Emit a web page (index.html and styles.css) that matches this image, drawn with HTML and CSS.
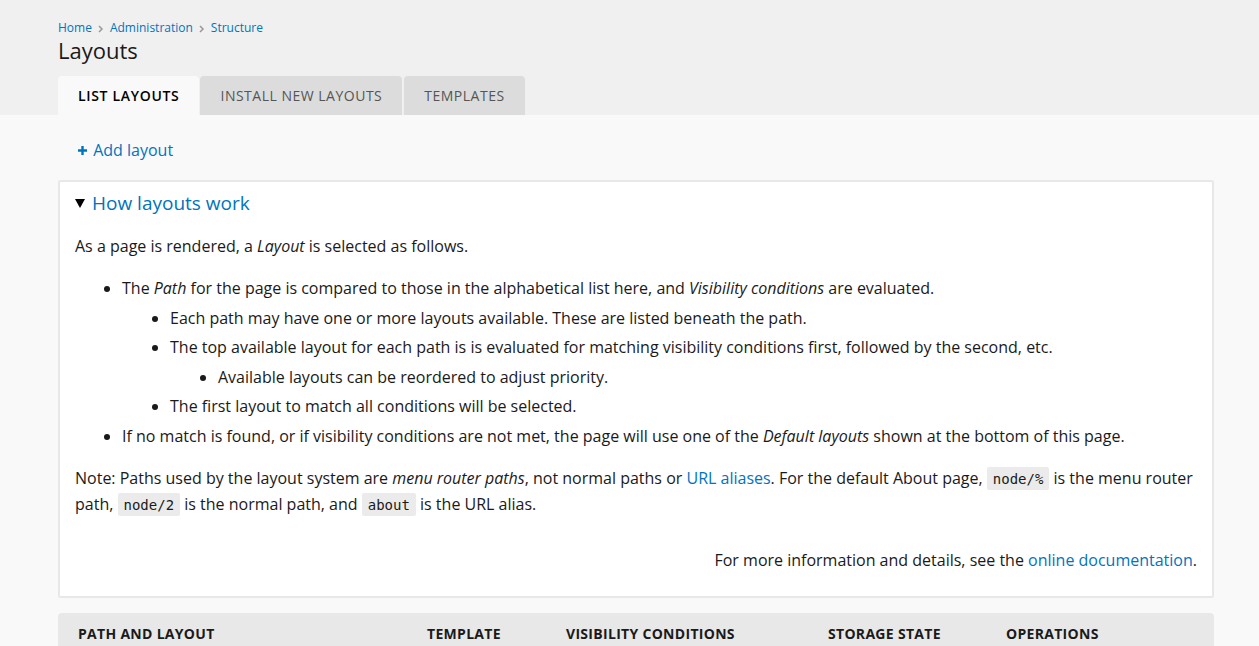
FILE: index.html
```html
<!DOCTYPE html>
<html lang="en">
<head>
    <meta charset="UTF-8">
    <title>Layouts</title>
    <link rel="stylesheet" href="styles.css">
</head>
<body>
    <div class="page-header">
        <nav class="breadcrumb">
            <a href="#">Home</a>
            <svg class="sep" width="6" height="8" viewBox="0 0 6 8"><path d="M1 1l3 3-3 3" fill="none" stroke="#999" stroke-width="1.5"/></svg>
            <a href="#">Administration</a>
            <svg class="sep" width="6" height="8" viewBox="0 0 6 8"><path d="M1 1l3 3-3 3" fill="none" stroke="#999" stroke-width="1.5"/></svg>
            <a href="#">Structure</a>
        </nav>
        <h1 class="page-title">Layouts</h1>
        <ul class="tabs">
            <li class="tab active"><a href="#">List layouts</a></li>
            <li class="tab"><a href="#">Install new layouts</a></li>
            <li class="tab"><a href="#">Templates</a></li>
        </ul>
    </div>

    <div class="main">
        <div class="action-links">
            <a href="#" class="add-link">
                <svg width="9" height="9" viewBox="0 0 9 9"><path d="M4.5 0v9M0 4.5h9" stroke="#0074bd" stroke-width="2.4"/></svg>
                Add layout
            </a>
        </div>

        <div class="help-box">
            <div class="help-title">
                <svg class="arrow" width="10" height="9" viewBox="0 0 10 9"><path d="M0 0h10L5 9z" fill="#000"/></svg>
                <a href="#">How layouts work</a>
            </div>
            <div class="help-body">
                <p>As a page is rendered, a <em>Layout</em> is selected as follows.</p>
                <ul>
                    <li>The <em>Path</em> for the page is compared to those in the alphabetical list here, and <em>Visibility conditions</em> are evaluated.
                        <ul>
                            <li>Each path may have one or more layouts available. These are listed beneath the path.</li>
                            <li>The top available layout for each path is is evaluated for matching visibility conditions first, followed by the second, etc.
                                <ul>
                                    <li>Available layouts can be reordered to adjust priority.</li>
                                </ul>
                            </li>
                            <li>The first layout to match all conditions will be selected.</li>
                        </ul>
                    </li>
                    <li>If no match is found, or if visibility conditions are not met, the page will use one of the <em>Default layouts</em> shown at the bottom of this page.</li>
                </ul>
                <p>Note: Paths used by the layout system are <em>menu router paths</em>, not normal paths or <a href="#">URL aliases</a>. For the default About page, <code>node/%</code> is the menu router path, <code>node/2</code> is the normal path, and <code>about</code> is the URL alias.</p>
                <p class="more-info">For more information and details, see the <a href="#">online documentation</a>.</p>
            </div>
        </div>

        <table class="layouts-table">
            <thead>
                <tr>
                    <th class="col-path">Path and layout</th>
                    <th class="col-template">Template</th>
                    <th class="col-visibility">Visibility conditions</th>
                    <th class="col-storage">Storage state</th>
                    <th class="col-ops">Operations</th>
                </tr>
            </thead>
        </table>
    </div>
</body>
</html>
```

FILE: styles.css
```css
body {
    margin: 0;
    padding: 0;
    background-color: #f9f9f9;
    color: #1a1a1a;
    font-family: "Open Sans", "Liberation Sans", sans-serif;
    font-size: 16px;
}

a {
    color: #0074bd;
    text-decoration: none;
}

.page-header {
    background: #f0f0f0;
    padding: 19px 45px 0 58px;
}

.breadcrumb {
    display: flex;
    align-items: center;
    gap: 6px;
    font-size: 12px;
    line-height: 18px;
}

.breadcrumb .sep {
    margin: 1px 0 0 0;
}

.page-title {
    margin: -2px 0 0;
    font-size: 22px;
    font-weight: 400;
    line-height: 30px;
    color: #1a1a1a;
}

.tabs {
    display: flex;
    gap: 2px;
    margin: 11px 0 0;
    padding: 0;
    list-style: none;
}

.tab a {
    display: block;
    padding: 0 20px;
    height: 39px;
    line-height: 40px;
    font-size: 14px;
    text-transform: uppercase;
    letter-spacing: 0.5px;
    color: #555;
    background: #dcdcdc;
    border-radius: 4px 4px 0 0;
}

.tab.active {
    margin-right: -1px;
}

.tab.active a {
    background: #f9f9f9;
    color: #000;
    font-weight: 600;
    letter-spacing: 0.68px;
}

.main {
    padding: 22px 45px 0 58px;
}

.action-links {
    padding-left: 20px;
    line-height: 26px;
}

.add-link svg {
    margin-right: 2px;
    vertical-align: 1px;
}

.help-box {
    margin-top: 17px;
    background: #fff;
    border: 2px solid #e8e8e8;
    border-radius: 2px;
    padding: 0 15px 23px;
}

.help-title {
    display: flex;
    align-items: center;
    gap: 7px;
    padding-top: 8px;
    font-size: 19px;
    line-height: 26px;
}

.help-body {
    margin-top: 17px;
    line-height: 26px;
}

.help-body p {
    margin: 0 0 16px;
}

.help-body ul {
    margin: 16px 0;
    padding-left: 47px;
    list-style: disc;
}

.help-body ul ul {
    margin: 0;
    padding-left: 48px;
    list-style: disc;
}

.help-body li {
    margin: 3.5px 0 0;
}

.help-body code {
    font-family: "DejaVu Sans Mono", "Liberation Mono", monospace;
    font-size: 14px;
    line-height: 1;
    background: #ebebeb;
    padding: 4px 6px 3px;
    border-radius: 2px;
}

.help-body .more-info {
    margin: 30px 0 0;
    text-align: right;
}

.layouts-table {
    width: 100%;
    margin-top: 15px;
    border-collapse: separate;
    border-spacing: 0;
}

.layouts-table th {
    background: #e8e8e8;
    text-align: left;
    font-size: 14px;
    font-weight: 700;
    letter-spacing: 0.3px;
    text-transform: uppercase;
    padding: 10px 20px;
    line-height: 22px;
}

.layouts-table th:first-child {
    border-radius: 4px 0 0 0;
}

.layouts-table th:last-child {
    border-radius: 0 4px 0 0;
}

.col-path { width: 309px; }
.col-template { width: 99px; }
.col-visibility { width: 222px; }
.col-storage { width: 138px; }
```
